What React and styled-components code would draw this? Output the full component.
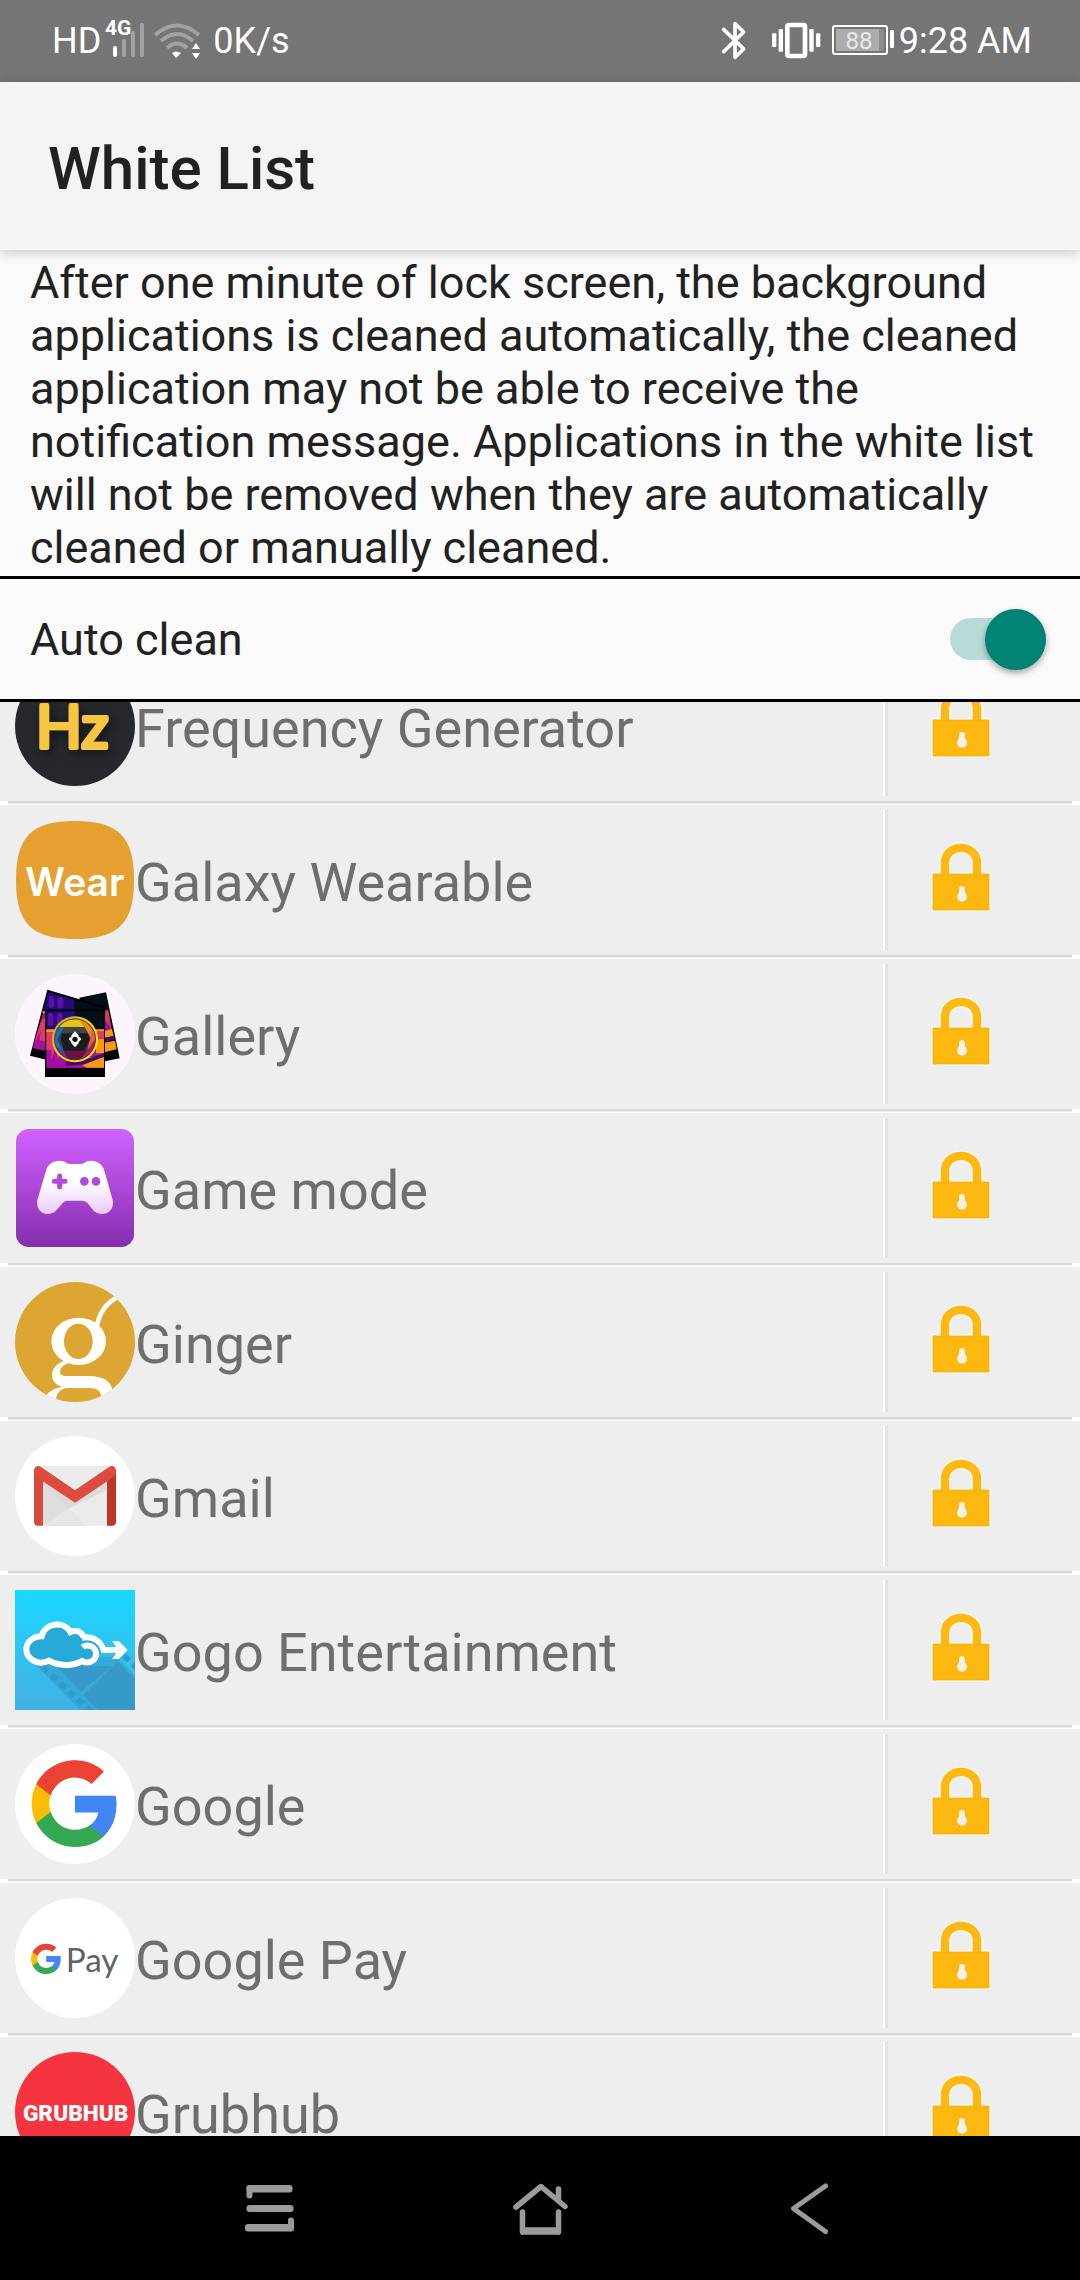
import React, { useLayoutEffect, useRef, useState } from 'react';
import styled, { createGlobalStyle } from 'styled-components';

const GlobalStyle = createGlobalStyle`
  * {
    box-sizing: border-box;
  }
  body {
    margin: 0;
    background: #000;
    font-family: Roboto, "Noto Sans", sans-serif;
  }
`;

const Screen = styled.div`
  display: flex;
  flex-direction: column;
  height: 100vh;
`;

const StatusBar = styled.header`
  display: flex;
  justify-content: space-between;
  flex: none;
  height: 82px;
  padding: 0 48px 0 52px;
  background: #757575;
  color: #fff;
  font-size: 36px;
  line-height: 42px;
`;
const StatusGroup = styled.div`
  display: flex;
  align-items: flex-start;
  gap: 4px;
  padding-top: 20px;
`;

const TitleBar = styled.div`
  position: relative;
  display: flex;
  align-items: center;
  flex: none;
  height: 168px;
  padding: 6px 48px 0;
  background: #f4f4f4;
  box-shadow: 0 2px 12px rgba(0, 0, 0, 0.22);
`;
const Title = styled.h1`
  margin: 0;
  color: #212121;
  font-size: 60px;
  font-weight: 500;
  line-height: 70px;
`;

const Description = styled.p`
  flex: none;
  margin: 0;
  padding: 6px 30px 2px;
  border-bottom: 3px solid #000;
  background: #fafafa;
  color: #212121;
  font-size: 45px;
  line-height: 53px;
`;

const AutoClean = styled.label`
  display: flex;
  align-items: center;
  justify-content: space-between;
  flex: none;
  height: 123px;
  padding: 0 34px 0 30px;
  border-bottom: 3px solid #000;
  background: #fafafa;
  color: #212121;
  font-size: 45px;
  line-height: 53px;
`;
const Switch = styled.input`
  display: flex;
  align-items: center;
  width: 96px;
  height: 42px;
  margin: 0;
  border-radius: 21px;
  background: ${({ checked }) => (checked ? '#b8dbd7' : '#b9b9b9')};
  appearance: none;

  &::before {
    content: '';
    flex: none;
    width: 61px;
    height: 61px;
    margin-left: ${({ checked }) => (checked ? 35 : 0)}px;
    border-radius: 50%;
    background: ${({ checked }) => (checked ? '#008375' : '#fafafa')};
    box-shadow: 0 3px 6px rgba(0, 0, 0, 0.35);
  }
`;

const List = styled.ul`
  flex: 1;
  min-height: 0;
  margin: 0;
  padding: 0;
  overflow-y: auto;
  background: #eee;
  list-style: none;
  scrollbar-width: none;
`;
const Row = styled.li`
  background: #fff;
`;
const RowBody = styled.div`
  display: flex;
  align-items: center;
  height: 150px;
  padding-left: 15px;
  background: #eee;
`;
const Separator = styled.div`
  height: 4px;
  margin: 0 8px;
  border-top: 2px solid #d5d9dd;
  border-bottom: 1px solid #fff;
  background: #eceef0;
`;
const AppName = styled.span`
  flex: 1;
  padding-top: 6px;
  color: #6e6e6e;
  font-size: 54px;
  line-height: 64px;
`;
const LockButton = styled.button`
  display: flex;
  align-items: center;
  width: 197px;
  height: 140px;
  padding: 0 0 0 45px;
  border: 0;
  border-left: 2px solid #fff;
  background: linear-gradient(to right, #e1e2e8 3px, transparent 3px);
`;

const NavBar = styled.nav`
  display: flex;
  justify-content: center;
  flex: none;
  height: 144px;
  background: #000;
`;
const NavButton = styled.button`
  display: flex;
  align-items: center;
  justify-content: center;
  width: 25%;
  padding: 0;
  border: 0;
  background: none;
`;

const Icon = ({ box, children }) => (
  <svg width="120" height="120" viewBox={ box } aria-hidden="true">{children}</svg>
);

const GoogleMark = ({ transform }) => (
  <g transform={ transform }>
    <path fill="#4285f4" d="M22.56 12.25c0-.78-.07-1.53-.2-2.25H12v4.26h5.92c-.26 1.37-1.04 2.53-2.21 3.31v2.77h3.57c2.08-1.92 3.28-4.74 3.28-8.09z" />
    <path fill="#34a853" d="M12 23c2.97 0 5.46-.98 7.28-2.66l-3.57-2.77c-.98.66-2.23 1.06-3.71 1.06-2.86 0-5.29-1.93-6.16-4.53H2.18v2.84C3.99 20.53 7.7 23 12 23z" />
    <path fill="#fbbc05" d="M5.84 14.09c-.22-.69-.35-1.36-.35-2.09s.13-1.43.35-2.09V7.07H2.18C1.43 8.55 1 10.22 1 12s.43 3.45 1.18 4.93l2.85-2.22.81-.62z" />
    <path fill="#ea4335" d="M12 5.38c1.62 0 3.06.56 4.21 1.64l3.15-3.15C17.45 2.09 14.97 1 12 1 7.7 1 3.99 3.47 2.18 7.07l3.66 2.84c.87-2.6 3.3-4.53 6.16-4.53z" />
  </g>
);

const FrequencyIcon = () => (
  <Icon box="45 378 360 360">
    <defs>
      <filter id="hz-shadow" x="-30%" y="-30%" width="160%" height="160%">
        <feDropShadow dx="8" dy="12" stdDeviation="16" floodColor="#000" floodOpacity="0.55" />
      </filter>
    </defs>
    <circle cx="225" cy="558" r="180" fill="#25282d" />
    <text
      x="107"
      y="623"
      fill="#f6c543"
      stroke="#f6c543"
      strokeWidth="12"
      strokeLinejoin="round"
      fontFamily="Lato, sans-serif"
      fontSize="182"
      filter="url(#hz-shadow)"
    >
      Hz
    </text>
  </Icon>
);

const WearIcon = () => (
  <Icon box="45 840 360 360">
    <path fill="#e5a031" d="M225 843C355 843 402 890 402 1020S355 1197 225 1197 48 1150 48 1020 95 843 225 843z" />
    <text x="76" y="1068" fill="#fff" fontFamily="Inter, sans-serif" fontSize="117" fontWeight="600">Wear</text>
  </Icon>
);

const GalleryIcon = () => (
  <Icon box="45 42 360 360">
    <defs>
      <linearGradient id="ring" x1="0" y1="0" x2="1" y2="1">
        <stop offset="0" stopColor="#c99b1e" />
        <stop offset="0.5" stopColor="#ffd90a" />
        <stop offset="1" stopColor="#ffe600" />
      </linearGradient>
      <clipPath id="lens"><circle cx="225" cy="238" r="60" /></clipPath>
    </defs>
    <circle cx="225" cy="222" r="180" fill="#fcf5fd" />
    {/* card at the right */}
    <path fill="#000" d="M238 113L318 97L359 295L300 307z" />
    <path fill="#020f16" d="M250 116L315 102L328 155L300 160z" />
    <path fill="#d8366b" d="M312 152L325 150L336 214L312 214z" />
    <path fill="#a0119b" d="M312 178L329 198L334 216L312 220z" />
    <path fill="#f99a0d" d="M312 214L336 207L341 228L312 234zM312 248L345 242L350 268L312 277z" />
    <path fill="#3d0a70" d="M312 234L342 228L344 240L312 246z" />
    {/* card at the left */}
    <path fill="#000" d="M142 89L318 141L300 200L150 302L90 287z" />
    <path fill="#250a79" d="M145 96L224 119V150H132z" />
    <path fill="#020f16" d="M224 119L310 143V150H224z" />
    <path fill="#a51199" d="M131 153H137V273L97 264z" />
    <path fill="#dd3a68" d="M121 190L137 168V245L118 240L124 210L104 250z" />
    <path fill="#f99a0d" d="M128 154H137V160H127z" />
    <g fill="#5b13a5"><rect x="146" y="108" width="16" height="36" rx="7" /><rect x="172" y="112" width="18" height="34" rx="7" /></g>
    {/* front card */}
    <rect x="135" y="148" width="180" height="203" fill="#000" />
    <rect x="139" y="154" width="86" height="58" fill="#250a79" />
    <rect x="225" y="154" width="86" height="56" fill="#020f16" />
    <rect x="139" y="210" width="173" height="114" fill="#a30fa0" />
    <path fill="#dd3a68" d="M139 214H200V262L190 250V284L180 262L174 300L166 262L154 300V270H139zM260 214H312V260H260z" />
    <path fill="#f99a0d" d="M139 208H170V216H139zM280 208H312V214H280zM225 292H312V323H262L225 306zM288 238H312V280H288z" />
    <path fill="#3d0a70" d="M198 306L250 300L312 280V290L250 314L198 317z" />
    <g fill="#5b13a5"><rect x="144" y="158" width="16" height="40" rx="7" /><rect x="171" y="158" width="17" height="40" rx="7" /></g>
    {/* lens */}
    <circle cx="225" cy="238" r="69" fill="url(#ring)" />
    <circle cx="225" cy="238" r="63" fill="#3b3a44" />
    <g clipPath="url(#lens)">
      <path fill="#e7c414" d="M160 202L185 178H240L258 202z" />
      <path fill="#e78a22" d="M230 170L290 190L276 240L254 202z" />
      <path fill="#df5d4a" d="M276 210L290 190V240L262 270z" />
      <path fill="#c01068" d="M290 230V300H235L262 272z" />
      <path fill="#6c1146" d="M190 272H262L235 304H200z" />
      <path fill="#5a3ba5" d="M172 238L205 300L165 290L160 240z" />
      <path fill="#1770b2" d="M160 202H192L172 238L188 272L160 256z" />
    </g>
    <path fill="#1b1b1d" d="M192 202H253L270 237L253 272H192L182 237z" />
    <path fill="#444448" d="M192 202H253L262 220H184z" />
    <path fill="#fff" d="M225 214L236 226V232H240L244 238L236 246V250L225 262L214 250V246L206 238L210 232H214V226z" />
    <circle cx="225" cy="238" r="8" fill="#111" />
  </Icon>
);

const GameIcon = () => (
  <Icon box="45 504 360 360">
    <defs>
      <linearGradient id="game-bg" x1="0" y1="0" x2="0" y2="1">
        <stop offset="0" stopColor="#d161ff" />
        <stop offset="1" stopColor="#852eae" />
      </linearGradient>
      <linearGradient id="game-pad" x1="0" y1="0" x2="0" y2="1">
        <stop offset="0.4" stopColor="#fff" />
        <stop offset="1" stopColor="#e9c9fb" />
      </linearGradient>
    </defs>
    <rect x="48" y="507" width="354" height="354" rx="38" fill="url(#game-bg)" />
    <path
      fill="url(#game-pad)"
      d="M138 632C144 604 180 594 200 609Q204 612 212 612H240Q248 612 252 609C272 594 306 604 313 632L338 720C343 742 329 762 306 762C293 762 284 757 277 748L263 730Q257 722 247 722H204Q194 722 188 729L172 748C165 757 156 762 144 762C121 762 107 742 112 720z"
    />
    <path stroke="#ae4bd9" strokeWidth="15" strokeLinecap="round" d="M163 664H195M179 648V680" />
    <circle cx="253" cy="664" r="13" fill="#ae4bd9" />
    <circle cx="288" cy="664" r="13" fill="#ae4bd9" />
  </Icon>
);

const GingerIcon = () => (
  <Icon box="45 66 360 360">
    <defs>
      <clipPath id="ginger-disc"><circle cx="225" cy="246" r="180" /></clipPath>
    </defs>
    <circle cx="225" cy="246" r="180" fill="#dda531" />
    <g clipPath="url(#ginger-disc)">
      <ellipse cx="236" cy="244" rx="82" ry="71" fill="#fff" />
      <ellipse cx="235" cy="244" rx="43" ry="53" fill="#dda531" />
      <path fill="none" stroke="#fff" strokeWidth="14" d="M291 196Q304 134 356 110" />
      <path
        fill="#fff"
        d="M190 303C170 312 156 325 156 345C156 365 168 374 186 381C165 384 146 394 136 410L168 424C168 404 178 384 204 384H270C292 384 303 394 303 410L338 392C334 362 306 348 268 348H200C186 348 180 343 180 335C182 322 192 314 206 309z"
      />
    </g>
  </Icon>
);

const GmailIcon = () => (
  <Icon box="45 528 360 360">
    <circle cx="225" cy="708" r="180" fill="#fff" />
    <rect x="112" y="618" width="226" height="179" fill="#ebebeb" />
    <path fill="#dedede" d="M129 665L256 797H135L129 790z" />
    <path fill="#d0d0d0" d="M129 665L225 728L321 665V690L205 746z" opacity="0.6" />
    <path fill="#e6e6e6" d="M135 797L205 744L256 797z" />
    <path fill="#d6483c" d="M102 634H129V797H114Q102 797 102 785z" />
    <path fill="#bf3528" d="M321 634H348V785Q348 797 336 797H321z" />
    <path fill="#dd4b3e" d="M123 621L225 691L327 621C338 613 348 621 348 633Q348 647 338 653L225 728L112 653Q102 647 102 633C102 621 112 613 123 621z" />
  </Icon>
);

const GogoIcon = () => (
  <Icon box="45 90 360 360">
    <defs>
      <linearGradient id="gogo-sky" x1="0" y1="0" x2="0" y2="1">
        <stop offset="0" stopColor="#1ad8ff" />
        <stop offset="1" stopColor="#43b0e3" />
      </linearGradient>
    </defs>
    <rect x="45" y="90" width="360" height="360" fill="url(#gogo-sky)" />
    <path fill="#33aad9" d="M100 308L240 450H405V346L350 290H190z" />
    <path fill="#3799ca" d="M170 318H336L242 396zM352 304L405 358V450H294L250 404z" />
    <path fill="none" stroke="#3799ca" strokeWidth="17" strokeDasharray="21 15" d="M128 320L275 457M372 287L412 326" />
    <path
      fill="#27a9d8"
      stroke="#fff"
      strokeWidth="18"
      d="M248 262C262 250 288 258 288 282C288 302 266 314 247 303C215 320 175 318 147 302C115 318 79 298 79 268C79 245 100 229 125 229C133 190 190 180 211 216C225 209 245 213 251 232"
    />
    <path fill="none" stroke="#fff" strokeWidth="18" d="M246 233C280 228 303 245 310 270H365" />
    <path fill="none" stroke="#27a9d8" strokeWidth="5" d="M246 246C278 240 296 254 301 280" />
    <path fill="#fff" d="M336 243H356L383 270L356 297H336L356 270z" />
  </Icon>
);

const GoogleIcon = () => (
  <Icon box="45 552 360 360">
    <circle cx="225" cy="732" r="180" fill="#fff" />
    <GoogleMark transform="translate(83 589) scale(11.82)" />
  </Icon>
);

const GooglePayIcon = () => (
  <Icon box="45 114 360 360">
    <circle cx="225" cy="294" r="180" fill="#fff" />
    <GoogleMark transform="translate(89 247) scale(4.13)" />
    <text x="197" y="336" fill="#5f6368" fontFamily="Lato, sans-serif" fontSize="100">Pay</text>
  </Icon>
);

const GrubhubIcon = () => (
  <Icon box="45 576 360 360">
    <circle cx="225" cy="756" r="180" fill="#f63440" />
    <text x="227" y="784" fill="#fff" fontSize="68" fontWeight="900" textAnchor="middle">GRUBHUB</text>
  </Icon>
);

const LockIcon = () => (
  <svg width="62" height="80" viewBox="390 900 186 240" aria-hidden="true">
    <g stroke="#f9f6ec" strokeWidth="10" fill="#f9f6ec">
      <rect x="399" y="1002" width="168" height="108" />
      <path fill="none" strokeWidth="34" d="M435 1005V970C435 908 531 908 531 970V1005" />
    </g>
    <path fill="none" stroke="#fcb813" strokeWidth="25" d="M435 1005V970C435 908 531 908 531 970V1005" />
    <rect x="399" y="1002" width="168" height="108" fill="#fdb80f" stroke="#efac10" strokeWidth="2" />
    <path fill="#f3f0e8" d="M477 1047Q477 1038 486 1038T495 1047V1057Q501 1063 501 1070A15 15 0 0 1 471 1070Q471 1063 477 1057z" />
  </svg>
);

const SignalIcon = () => (
  <svg width="44" height="40" viewBox="0 0 44 40" overflow="visible" aria-label="4G signal">
    <rect x="8" y="26" width="4" height="11" rx="2" fill="#fff" />
    <g fill="#a2a2a2">
      <rect x="17" y="19" width="4" height="18" rx="2" />
      <rect x="26" y="11" width="4" height="26" rx="2" />
      <rect x="35" y="3" width="4" height="34" rx="2" />
    </g>
    <text x="0" y="15" fill="#fff" fontSize="21" fontWeight="700">4G</text>
  </svg>
);

const WifiIcon = () => (
  <svg width="56" height="40" viewBox="0 -3 56 40" aria-label="Wi-Fi">
    <g fill="none" stroke="#a2a2a2" strokeWidth="4">
      <path d="M2 12Q24 -7 46 12" />
      <path d="M8 18Q24 4 40 18" />
      <path d="M14 25Q24 16 34 25" />
    </g>
    <path fill="#fff" d="M19 30Q23 27 28 30L23 35zM39 26L43 20L47 26zM39 30H47L43 36z" />
  </svg>
);

const BluetoothIcon = () => (
  <svg width="46" height="40" viewBox="240 60 138 120" aria-label="Bluetooth">
    <path fill="none" stroke="#fff" strokeWidth="11" strokeLinecap="round" strokeLinejoin="round" d="M248 88L308 147L282 172V71L308 96L248 155" />
  </svg>
);

const VibrateIcon = () => (
  <svg width="56" height="40" viewBox="391 60 168 120" aria-label="Vibrate">
    <rect x="440" y="75" width="53" height="93" rx="5" fill="none" stroke="#fff" strokeWidth="14" />
    <g fill="#fff">
      <rect x="394" y="100" width="13" height="41" rx="3" />
      <rect x="414" y="87" width="13" height="68" rx="3" />
      <rect x="506" y="87" width="13" height="68" rx="3" />
      <rect x="526" y="100" width="13" height="41" rx="3" />
    </g>
  </svg>
);

const BatteryIcon = () => (
  <svg width="64" height="40" viewBox="0 0 64 40" aria-label="Battery 88%">
    <rect x="2" y="6" width="54" height="28" rx="2" fill="none" stroke="#fff" strokeWidth="2" />
    <rect x="5" y="9" width="48" height="22" fill="#8c8c8c" />
    <rect x="5" y="9" width="43" height="22" fill="#acacac" />
    <rect x="59" y="10" width="4" height="18" rx="1" fill="#fff" />
    <text x="28" y="29" fill="#e8e8e8" fontSize="24" textAnchor="middle">88</text>
  </svg>
);

const apps = [
  { name: 'Frequency Generator', Logo: FrequencyIcon },
  { name: 'Galaxy Wearable', Logo: WearIcon },
  { name: 'Gallery', Logo: GalleryIcon },
  { name: 'Game mode', Logo: GameIcon },
  { name: 'Ginger', Logo: GingerIcon },
  { name: 'Gmail', Logo: GmailIcon },
  { name: 'Gogo Entertainment', Logo: GogoIcon },
  { name: 'Google', Logo: GoogleIcon },
  { name: 'Google Pay', Logo: GooglePayIcon },
  { name: 'Grubhub', Logo: GrubhubIcon },
];

const App = () => {
  const [autoClean, setAutoClean] = useState(true);
  const listRef = useRef(null);

  useLayoutEffect(() => {
    listRef.current.scrollTop = 51;
  }, []);

  return (
    <Screen>
      <GlobalStyle />
      <StatusBar>
        <StatusGroup>
          <span>HD</span>
          <SignalIcon />
          <WifiIcon />
          <span>0K/s</span>
        </StatusGroup>
        <StatusGroup>
          <BluetoothIcon />
          <VibrateIcon />
          <BatteryIcon />
          <span>9:28 AM</span>
        </StatusGroup>
      </StatusBar>
      <TitleBar>
        <Title>White List</Title>
      </TitleBar>
      <Description>
        After one minute of lock screen, the background applications is cleaned automatically,
        the cleaned application may not be able to receive the notification message.
        Applications in the white list will not be removed when they are automatically cleaned
        or manually cleaned.
      </Description>
      <AutoClean>
        Auto clean
        <Switch
          type="checkbox"
          role="switch"
          checked={ autoClean }
          onChange={ () => setAutoClean(!autoClean) }
        />
      </AutoClean>
      <List ref={ listRef }>
        {apps.map(({ name, Logo }) => (
          <Row key={ name }>
            <RowBody>
              <Logo />
              <AppName>{name}</AppName>
              <LockButton type="button" aria-label={ `Unlock ${name}` }>
                <LockIcon />
              </LockButton>
            </RowBody>
            <Separator />
          </Row>
        ))}
      </List>
      <NavBar>
        <NavButton type="button" aria-label="Menu">
          <svg width="56" height="56" viewBox="0 0 56 56" fill="#9b9b9b">
            <rect x="4.5" y="5" width="46" height="7.5" rx="3" />
            <rect x="4.5" y="5" width="6" height="13.5" rx="3" />
            <rect x="4.5" y="25" width="47" height="7" rx="3" />
            <rect x="3" y="44" width="48" height="7.5" rx="3" />
            <rect x="46" y="37.5" width="6" height="14" rx="3" />
          </svg>
        </NavButton>
        <NavButton type="button" aria-label="Home">
          <svg width="56" height="56" viewBox="0 0 56 56" fill="none" stroke="#9b9b9b" strokeWidth="5.5" strokeLinecap="round" strokeLinejoin="round">
            <path d="M4 27L29 6.5L53 26.5M46.5 9V20" />
            <path d="M10.5 32V52M46.5 32V52" />
            <path strokeWidth="7.5" strokeLinecap="butt" d="M9 51H48" />
          </svg>
        </NavButton>
        <NavButton type="button" aria-label="Back">
          <svg width="56" height="56" viewBox="0 0 56 56" fill="none" stroke="#9b9b9b" strokeWidth="5" strokeLinecap="round" strokeLinejoin="round">
            <path d="M43.5 6L11.5 28.5L43.5 51.5" />
          </svg>
        </NavButton>
      </NavBar>
    </Screen>
  );
};

export default App;
